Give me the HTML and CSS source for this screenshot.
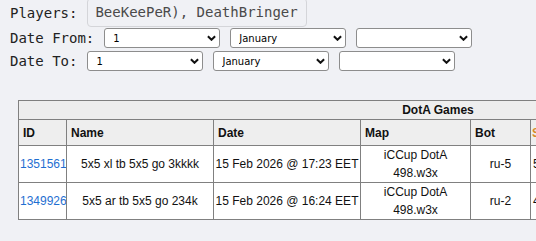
FILE: index.html
```html
<!DOCTYPE html>
<html lang="en">
<head>
    <meta charset="UTF-8">
    <meta name="viewport" content="width=device-width, initial-scale=1.0">
    <title>DotA Games</title>
    <link rel="stylesheet" href="styles.css">
</head>
<body>
    <div class="filters">
        <div class="filter-row">
            <span class="label">Players:</span>
            <div class="player-box">BeeKeePeR), DeathBringer</div>
        </div>
        <div class="filter-row">
            <label class="label">Date From:</label>
            <div class="pick">
                <select><option>1</option></select>
                <svg class="chevron" viewBox="0 0 10 6"><path d="M1 1 L5 5 L9 1"/></svg>
            </div>
            <div class="pick">
                <select><option>January</option></select>
                <svg class="chevron" viewBox="0 0 10 6"><path d="M1 1 L5 5 L9 1"/></svg>
            </div>
            <div class="pick">
                <select><option></option></select>
                <svg class="chevron" viewBox="0 0 10 6"><path d="M1 1 L5 5 L9 1"/></svg>
            </div>
        </div>
        <div class="filter-row">
            <label class="label">Date To:</label>
            <div class="pick">
                <select><option>1</option></select>
                <svg class="chevron" viewBox="0 0 10 6"><path d="M1 1 L5 5 L9 1"/></svg>
            </div>
            <div class="pick">
                <select><option>January</option></select>
                <svg class="chevron" viewBox="0 0 10 6"><path d="M1 1 L5 5 L9 1"/></svg>
            </div>
            <div class="pick">
                <select><option></option></select>
                <svg class="chevron" viewBox="0 0 10 6"><path d="M1 1 L5 5 L9 1"/></svg>
            </div>
        </div>
    </div>

    <div class="table-wrap">
        <table class="games">
            <colgroup>
                <col class="c-id">
                <col class="c-name">
                <col class="c-date">
                <col class="c-map">
                <col class="c-bot">
                <col class="c-slots">
                <col class="c-dur">
                <col class="c-winner">
                <col class="c-rep">
            </colgroup>
            <thead>
                <tr><th class="title" colspan="9">DotA Games</th></tr>
                <tr>
                    <th>ID</th>
                    <th>Name</th>
                    <th>Date</th>
                    <th>Map</th>
                    <th>Bot</th>
                    <th class="sort"><a href="#">Slots</a></th>
                    <th>Duration</th>
                    <th>Winner</th>
                    <th>Replay</th>
                </tr>
            </thead>
            <tbody>
                <tr>
                    <td><a href="#">1351561</a></td>
                    <td>5x5 xl tb 5x5 go 3kkkk</td>
                    <td>15 Feb 2026 @ 17:23 EET</td>
                    <td>iCCup DotA<br>498.w3x</td>
                    <td>ru-5</td>
                    <td class="slots">5/10</td>
                    <td>41:12</td>
                    <td>Sentinel</td>
                    <td>-</td>
                </tr>
                <tr>
                    <td><a href="#">1349926</a></td>
                    <td>5x5 ar tb 5x5 go 234k</td>
                    <td>15 Feb 2026 @ 16:24 EET</td>
                    <td>iCCup DotA<br>498.w3x</td>
                    <td>ru-2</td>
                    <td class="slots">4/10</td>
                    <td>37:50</td>
                    <td>Scourge</td>
                    <td>-</td>
                </tr>
            </tbody>
        </table>
    </div>
</body>
</html>
```

FILE: styles.css
```css
html, body {
    overflow: hidden;
}

body {
    margin: 0;
    background-color: #f0f1f5;
    font-family: "DejaVu Sans Mono", monospace;
    color: #222;
}

.filters {
    margin-top: -2px;
    padding: 0 10px;
}

.filter-row {
    display: flex;
    align-items: center;
    gap: 10px;
    margin-bottom: 3px;
}

.filter-row:first-child {
    margin-bottom: 1px;
}

.label {
    font-size: 14px;
    white-space: nowrap;
}

.player-box {
    font-size: 14px;
    line-height: 17px;
    color: #4a4a4a;
    padding: 5px 8px 5px 7px;
    border: 1px solid #d4d5d9;
    border-radius: 4px;
    white-space: nowrap;
}

.pick {
    position: relative;
}

.pick select {
    appearance: none;
    -webkit-appearance: none;
    display: block;
    width: 116px;
    height: 20px;
    margin: 0;
    padding: 0 20px 0 8px;
    font-family: "DejaVu Sans", sans-serif;
    font-size: 10px;
    color: #000;
    background: #fff;
    border: 1px solid #8d8d8d;
    border-radius: 3px;
}

/* arrow drawn over the select */
.chevron {
    position: absolute;
    right: 4px;
    top: 7px;
    width: 9px;
    height: 6px;
    pointer-events: none;
}

.chevron path {
    fill: none;
    stroke: #111;
    stroke-width: 2.2;
}

.table-wrap {
    margin-top: 29px;
    padding-left: 18px;
}

.games {
    border-collapse: collapse;
    font-family: "Liberation Sans", Arial, sans-serif;
    font-size: 12px;
    line-height: 18px;
    color: #111;
    width: 839px;
    table-layout: fixed;
}

.games th, .games td {
    border: 1px solid #808080;
    white-space: nowrap;
    overflow: hidden;
}

.games th {
    background-color: #eeeeee;
    text-align: left;
    padding: 4px 4px 3px;
}

.games th.title {
    text-align: center;
    padding: 0 4px;
}

.games th.sort {
    padding-left: 1px;
}

.games td {
    background-color: #fff;
    text-align: center;
    padding: 0 1px;
}

.games td.slots {
    text-align: left;
    padding-left: 2px;
}

.games a {
    color: #1f6fd1;
    text-decoration: none;
}

.games th a {
    color: #d9892a;
}

.c-id { width: 48px; }
.c-name { width: 147px; }
.c-date { width: 147px; }
.c-map { width: 110px; }
.c-bot { width: 60px; }
.c-slots { width: 60px; }
.c-dur { width: 80px; }
.c-winner { width: 100px; }
.c-rep { width: 87px; }
```
